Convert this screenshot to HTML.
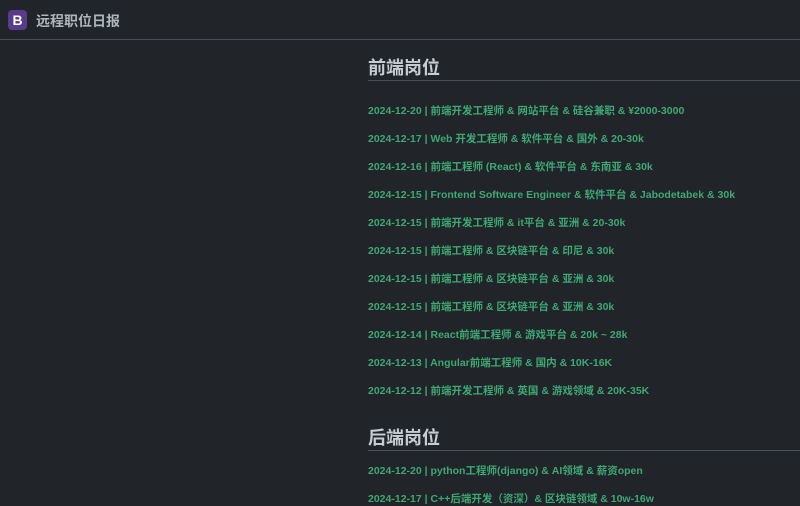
<!DOCTYPE html>
<html><head><meta charset="utf-8"><style>
*{margin:0;padding:0;box-sizing:border-box}
body{width:800px;height:498px;overflow:hidden;background:#212529;font-family:"Liberation Sans","Noto Sans CJK SC",sans-serif}
.hdr{height:40px;border-bottom:1px solid #4a4f57;position:relative;background:#212529}
.logo{position:absolute;left:8px;top:10px;width:19px;height:20px;background:#5a3a8a;border-radius:4px;color:#fff;font-weight:bold;font-size:14px;text-align:center;line-height:20px}
.title{position:absolute;left:36px;top:11px;color:#adb5bd;font-size:14px;font-weight:bold}
.main{position:absolute;left:368px;top:0;right:0}
h2{position:absolute;left:0;font-size:18px;color:#c5ccd4;font-weight:bold;line-height:22px}
.hr{position:absolute;left:0;right:0;height:1px;background:#495057}
a{position:absolute;left:0;color:#3da874;font-size:10.5px;font-weight:bold;text-decoration:none;white-space:nowrap}
</style></head><body>
<div class="hdr"><div class="logo">B</div><div class="title">远程职位日报</div></div>
<div class="main">
<h2 style="top:57px">前端岗位</h2><div class="hr" style="top:80px"></div>
<a style="top:103px">2024-12-20 | 前端开发工程师 &amp; 网站平台 &amp; 硅谷兼职 &amp; ¥2000-3000</a>
<a style="top:131px">2024-12-17 | Web 开发工程师 &amp; 软件平台 &amp; 国外 &amp; 20-30k</a>
<a style="top:159px">2024-12-16 | 前端工程师 (React) &amp; 软件平台 &amp; 东南亚 &amp; 30k</a>
<a style="top:187px">2024-12-15 | Frontend Software Engineer &amp; 软件平台 &amp; Jabodetabek &amp; 30k</a>
<a style="top:215px">2024-12-15 | 前端开发工程师 &amp; it平台 &amp; 亚洲 &amp; 20-30k</a>
<a style="top:243px">2024-12-15 | 前端工程师 &amp; 区块链平台 &amp; 印尼 &amp; 30k</a>
<a style="top:271px">2024-12-15 | 前端工程师 &amp; 区块链平台 &amp; 亚洲 &amp; 30k</a>
<a style="top:299px">2024-12-15 | 前端工程师 &amp; 区块链平台 &amp; 亚洲 &amp; 30k</a>
<a style="top:327px">2024-12-14 | React前端工程师 &amp; 游戏平台 &amp; 20k ~ 28k</a>
<a style="top:355px">2024-12-13 | Angular前端工程师 &amp; 国内 &amp; 10K-16K</a>
<a style="top:383px">2024-12-12 | 前端开发工程师 &amp; 英国 &amp; 游戏领域 &amp; 20K-35K</a>
<h2 style="top:427px">后端岗位</h2><div class="hr" style="top:450px"></div>
<a style="top:463px">2024-12-20 | python工程师(django) &amp; AI领域 &amp; 薪资open</a>
<a style="top:491px">2024-12-17 | C++后端开发（资深）&amp; 区块链领域 &amp; 10w-16w</a>
</div>
</body></html>
